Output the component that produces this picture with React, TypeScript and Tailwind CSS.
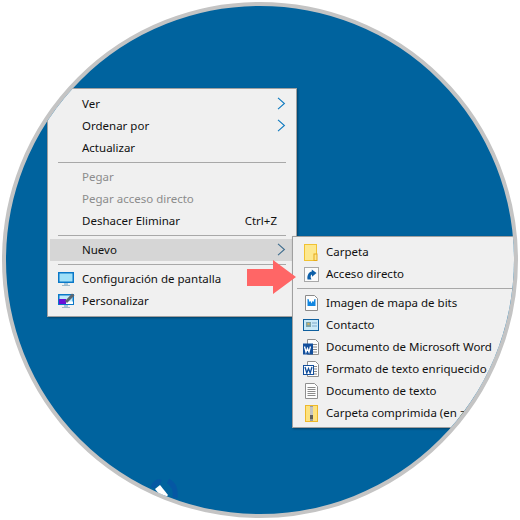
import React from "react";

const MenuRow = ({
  label,
  icon,
  shortcut,
  arrow,
  disabled,
  active,
  textLeft = "pl-[34px]",
}: {
  label: string;
  icon?: React.ReactNode;
  shortcut?: string;
  arrow?: "blue" | "dark";
  disabled?: boolean;
  active?: boolean;
  textLeft?: string;
}) => (
  <div
    className={`relative flex h-[22px] items-center whitespace-nowrap ${textLeft} ${
      active ? "bg-[#d6d6d6]" : ""
    } ${disabled ? "text-[#8c8c8c]" : "text-[#111111]"}`}
  >
    {icon && <span className="absolute left-[8px] top-[2px] flex h-[18px] w-[20px] items-center justify-center">{icon}</span>}
    <span>{label}</span>
    {shortcut && <span className="absolute right-[19px]">{shortcut}</span>}
    {arrow && (
      <svg className={`absolute top-[4px] ${active ? "right-[8px]" : "right-[10px]"}`} width="9" height="13" viewBox="0 0 9 13" fill="none">
        <path d="M1 .8 7.4 6.5 1 12.2" stroke={arrow === "blue" ? "#0f7ac0" : "#3f6d8e"} strokeWidth="1.1" />
      </svg>
    )}
  </div>
);

const Separator = ({ className }: { className: string }) => <div className={`h-px bg-[#a8a8a8] ${className}`} />;

const MonitorIcon = ({ paint }: { paint?: boolean }) => (
  <svg width="17" height="16" viewBox="0 0 17 16">
    <rect x="0" y="1" width="16" height="11" fill="#0a78c8" />
    <rect x="1.5" y="2.5" width="13" height="8" fill={paint ? "#bfe9fa" : "#9fe0f8"} />
    <rect x="6" y="12" width="4" height="2" fill="#a9c6d8" />
    <rect x="4" y="14" width="8" height="1" fill="#9db8c9" />
    {paint && (
      <>
        <rect x="1" y="6" width="7" height="5" fill="#6a0fd8" />
        <rect x="8" y="8.5" width="7" height="2.5" fill="#ffffff" />
        <path d="M7 8 14 .5 16.5 2.5 9 10Z" fill="#5c6670" />
      </>
    )}
  </svg>
);

const FolderIcon = () => (
  <svg width="14" height="17" viewBox="0 0 14 17">
    <rect x=".5" y=".5" width="12" height="16" fill="#fde88f" stroke="#f1c232" />
    <rect x="10" y="10" width="3" height="6.5" fill="#fde88f" stroke="#e6a91e" />
  </svg>
);

const ShortcutIcon = () => (
  <svg width="15" height="15" viewBox="0 0 15 15">
    <rect x=".5" y=".5" width="14" height="14" fill="#fbfbfb" stroke="#a9a9a9" />
    <path d="M3.5 12.5C2.8 8 5 4.8 7.8 4.4V2.4L12.5 6 8 9.8V7.6C6.8 7.9 6 9.8 7.4 12.5Z" fill="#0d5fa8" />
  </svg>
);

const BitmapIcon = () => (
  <svg width="13" height="16" viewBox="0 0 13 16">
    <path d="M.5.5H9.5L12.5 3.5V15.5H.5Z" fill="#fdfdfd" stroke="#8b8b8b" />
    <rect x="2.5" y="4" width="8" height="7" fill="#1186e0" />
    <path d="M3.5 4h6l-1 3-1-1-1 2.5-1-2.5-1 1Z" fill="#ffffff" />
  </svg>
);

const ContactIcon = () => (
  <svg width="16" height="13" viewBox="0 0 16 13">
    <rect x=".5" y=".5" width="15" height="11" fill="#c9e9f7" stroke="#0f5f9e" />
    <rect x="3" y="3" width="5" height="5" fill="#7da3a8" />
    <rect x="4.5" y="4" width="2" height="2" fill="#d4b25f" />
    <rect x="9" y="3.5" width="5" height="1" fill="#7fa9c9" />
    <rect x="9" y="6.5" width="5" height="1" fill="#7fa9c9" />
  </svg>
);

const WordIcon = ({ wide }: { wide?: boolean }) => (
  <svg width="17" height="16" viewBox="0 0 17 16">
    <path d="M4.5.5H12.5L15.5 3.5V15.5H4.5Z" fill="#fdfdfd" stroke="#8f8f8f" />
    <path d="M10 5.5h4M10 8h4M10 10.5h4M10 13h4" stroke="#8a8a8a" strokeWidth="1" />
    <rect
      x=".5"
      y={wide ? 4.5 : 5}
      width={wide ? 10 : 9}
      height={wide ? 9 : 10}
      fill={wide ? "#ffffff" : "#134f9c"}
      stroke="#134f9c"
    />
    <path
      d={wide ? "M2 6 3.8 12 5.5 7.5 7.2 12 9 6" : "M1.5 7.5 3 13 4.5 9.5 6 13 7.5 7.5"}
      fill="none"
      stroke={wide ? "#134f9c" : "#ffffff"}
      strokeWidth="1.3"
    />
  </svg>
);

const TextIcon = () => (
  <svg width="13" height="16" viewBox="0 0 13 16">
    <path d="M.5.5H9.5L12.5 3.5V15.5H.5Z" fill="#fdfdfd" stroke="#8f8f8f" />
    <path d="M2.5 4.5h8M2.5 6.5h8M2.5 8.5h8M2.5 10.5h8M2.5 12.5h8" stroke="#8a8a8a" strokeWidth="1" />
  </svg>
);

const ZipIcon = () => (
  <svg width="13" height="17" viewBox="0 0 13 17">
    <rect x=".5" y=".5" width="12" height="16" fill="#fde27f" stroke="#eeb82b" />
    <rect x="5" y="1" width="3" height="15" fill="#9c9c9c" />
    <path d="M5 3h3M5 5h3M5 7h3M5 9h3" stroke="#e9e9e9" strokeWidth="1" />
    <rect x="5" y="10" width="3" height="4" fill="#5f5f5f" />
  </svg>
);

export default function App() {
  return (
    <div className="h-[520px] w-[520px] overflow-hidden bg-white font-['Noto_Sans',sans-serif] text-[11.5px] leading-none">
      {/* Circular crop of the desktop */}
      <div className="relative ml-[2px] mt-[2px] h-[516px] w-[516px] overflow-hidden rounded-full border-[4px] border-[#c4c4c4] bg-[#00639e]">
        {/* Leftover desktop icon at the bottom of the crop */}
        <svg className="absolute left-[142px] top-[470px]" width="40" height="28" viewBox="0 0 40 28">
          <path d="M5 12C6 7 10 5 13 6" fill="none" stroke="#0a4fa8" strokeWidth="5" opacity=".55" />
          <path d="M20 5C26 8 28 14 27 22" fill="none" stroke="#0a4fa8" strokeWidth="5" opacity=".55" />
          <path d="M7 13 12 9 20 19 16 24Z" fill="#ffffff" />
        </svg>

        {/* Context menu */}
        <div className="absolute left-[41px] top-[82px] w-[250px] border border-[#a0a0a0] bg-[#f0f0f0] py-[4px] shadow-[1px_1px_2px_rgba(0,0,0,0.35)]">
          <MenuRow label="Ver" arrow="blue" />
          <MenuRow label="Ordenar por" arrow="blue" />
          <MenuRow label="Actualizar" />
          <Separator className="mx-[10px] my-[3px]" />
          <MenuRow label="Pegar" disabled />
          <MenuRow label="Pegar acceso directo" disabled />
          <MenuRow label="Deshacer Eliminar" shortcut="Ctrl+Z" />
          <Separator className="mx-[10px] my-[3px]" />
          <div className="mx-[2px]">
            <MenuRow label="Nuevo" arrow="dark" active textLeft="pl-[32px]" />
          </div>
          <Separator className="mx-[10px] my-[3px]" />
          <MenuRow label="Configuración de pantalla" icon={<MonitorIcon />} />
          <MenuRow label="Personalizar" icon={<MonitorIcon paint />} />
        </div>

        {/* Nuevo submenu, runs past the edge of the crop */}
        <div className="absolute left-[286px] top-[230px] w-[260px] border border-[#a0a0a0] bg-[#f0f0f0] pb-[3px] pt-[4px] shadow-[1px_1px_2px_rgba(0,0,0,0.35)]">
          <MenuRow label="Carpeta" icon={<FolderIcon />} textLeft="pl-[33px]" />
          <MenuRow label="Acceso directo" icon={<ShortcutIcon />} textLeft="pl-[33px]" />
          <Separator className="ml-[4px] my-[3px]" />
          <MenuRow label="Imagen de mapa de bits" icon={<BitmapIcon />} textLeft="pl-[33px]" />
          <MenuRow label="Contacto" icon={<ContactIcon />} textLeft="pl-[33px]" />
          <MenuRow label="Documento de Microsoft Word" icon={<WordIcon />} textLeft="pl-[33px]" />
          <MenuRow label="Formato de texto enriquecido" icon={<WordIcon wide />} textLeft="pl-[33px]" />
          <MenuRow label="Documento de texto" icon={<TextIcon />} textLeft="pl-[33px]" />
          <MenuRow label="Carpeta comprimida (en zip)" icon={<ZipIcon />} textLeft="pl-[33px]" />
        </div>

        {/* Red callout arrow */}
        <svg className="absolute left-[241px] top-[254px]" width="50" height="36" viewBox="0 0 50 36">
          <path d="M0 9H26V0L49 17 26 34V26H0Z" fill="#ff6666" />
        </svg>
      </div>
    </div>
  );
}
